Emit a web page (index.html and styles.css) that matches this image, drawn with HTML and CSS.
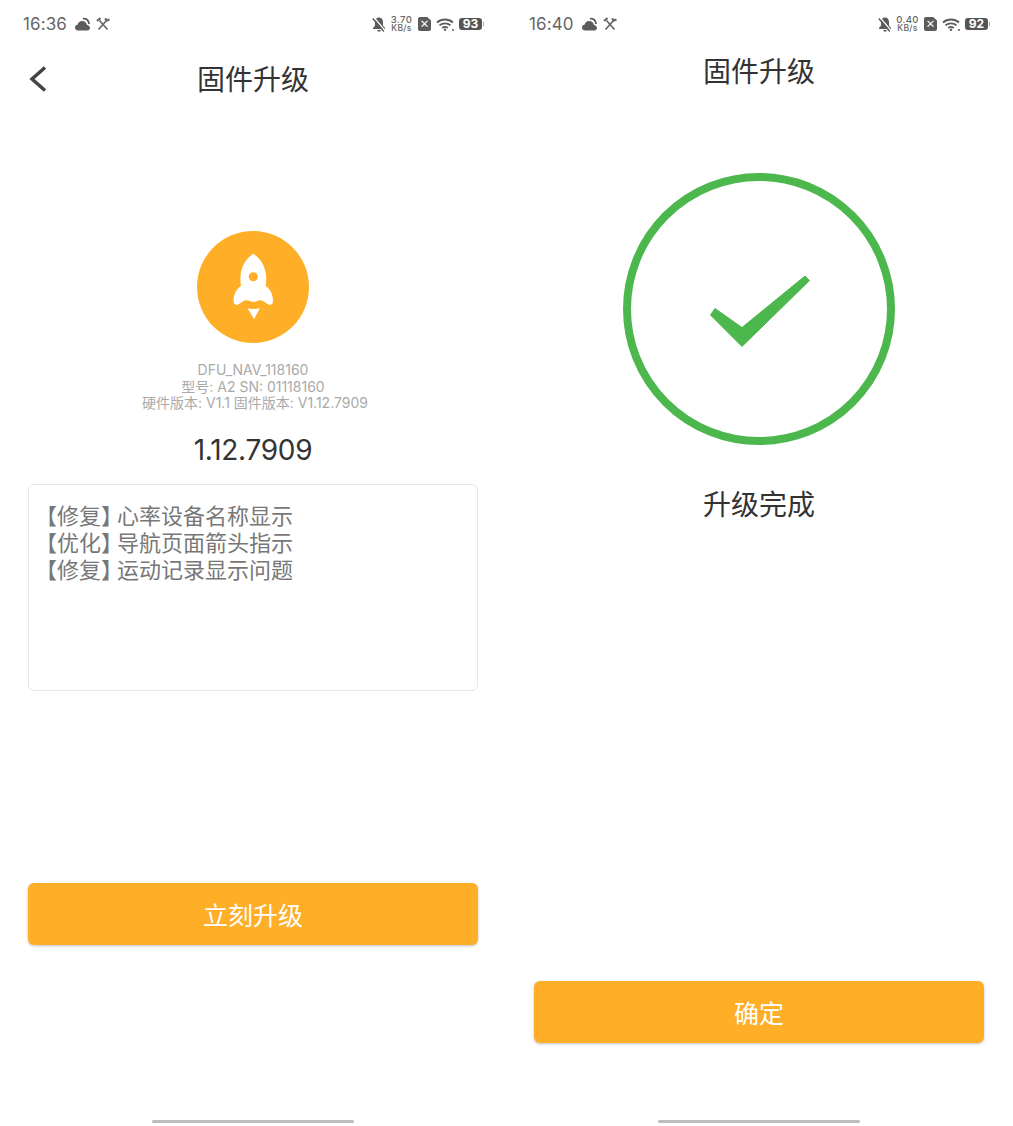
FILE: index.html
```html
<!DOCTYPE html>
<html lang="zh">
<head>
  <meta charset="UTF-8">
  <title>固件升级</title>
  <link rel="stylesheet" href="styles.css">
</head>
<body>
  <div class="screens">

    <div class="phone">
      <div class="status-bar">
        <span class="time">16:36</span>
        <svg class="ic-cloud" viewBox="0 0 15 14"><path d="M3 13.500C1 13.500 0 12 0 10.500 0 9 1.200 8 2.500 7.800 3 5.500 5 4 7 4c2.500 0 4.500 1.500 5 4 1.500 0 3 1.500 3 3s-1.500 2.500-2.500 2.500z"/><path class="crescent" d="M8 1.800c3-.8 6 1.700 6 5.200"/></svg>
        <svg class="ic-tools" viewBox="0 0 14 14"><path d="M3.500 3.500l8 9M10.500 3.500l-8 9"/><path class="head" d="M1 4l3.500-3M9 1.500l2 2 2.500-1"/></svg>
        <span class="status-right">
          <svg class="ic-bell" viewBox="0 0 14 15"><path d="M7 .5C4.500.5 3 2.500 3 5v3.500L1 11v1h12v-1l-2-2.500V5C11 2.500 9.500.5 7 .5zM5.200 13h3.600c0 .9-.8 1.700-1.800 1.700S5.200 13.900 5.200 13z"/><path class="gap" d="M2 .5l11 13"/><path class="slash" d="M.8 1.500l11 13"/></svg>
          <span class="speed"><b>3.70</b><b>KB/s</b></span>
          <span class="sim">×</span>
          <svg class="ic-wifi" viewBox="0 0 18 13"><path d="M1 4.500C5.500.5 12.500.5 17 4.500M3.500 7.400c3-2.600 8-2.600 11 0M6.200 10c1.600-1.200 4-1.200 5.600 0"/><circle cx="9" cy="11.800" r="1.200"/><circle cx="17" cy="12" r="1"/></svg>
          <span class="battery"><span class="battery-level">93</span></span>
        </span>
      </div>

      <div class="title-bar">
        <svg class="back" viewBox="0 0 20 28"><path d="M17 2.500L4 14l13 11.500"/></svg>
        <h1 class="title">固件升级</h1>
      </div>

      <div class="app-icon">
        <svg viewBox="0 0 112 112">
          <path d="M56.300 22.800C50 26.500 44 35 43.500 45.500c-.2 3.500 0 6.500.5 9.500-4.800 3.200-7.400 8.800-7.400 15 0 3.500 2.400 4.600 5 3.300 2.500-1.300 4-3.500 7-4 3-.3 5.200 1.400 7.700 1.700 2.500-.3 4.700-2 7.700-1.700 3 .5 4.500 2.700 7 4 2.600 1.300 5 .2 5-3.300 0-6.200-2.600-11.800-7.400-15 .5-3 .7-6 .5-9.500C68.600 35 62.600 26.500 56.300 22.800z" fill="#fff"/>
          <circle cx="56.300" cy="45.700" r="4.500" fill="#ffae27"/>
          <path d="M50.500 77.300c4 1 8.500 1 12.500 0L57 88z" fill="#fff"/>
        </svg>
      </div>

      <div class="device-info">
        <div>DFU_NAV_118160</div>
        <div>型号: A2 SN: 01118160</div>
        <div class="hw-line">硬件版本: V1.1 固件版本: V1.12.7909</div>
      </div>

      <div class="version">1.12.7909</div>

      <div class="changelog">
        <div><span class="tag">【修复】</span>心率设备名称显示</div>
        <div><span class="tag">【优化】</span>导航页面箭头指示</div>
        <div><span class="tag">【修复】</span>运动记录显示问题</div>
      </div>

      <button class="btn btn-upgrade">立刻升级</button>
      <div class="home-bar"></div>
    </div>

    <div class="phone">
      <div class="status-bar">
        <span class="time">16:40</span>
        <svg class="ic-cloud" viewBox="0 0 15 14"><path d="M3 13.500C1 13.500 0 12 0 10.500 0 9 1.200 8 2.500 7.800 3 5.500 5 4 7 4c2.500 0 4.500 1.500 5 4 1.500 0 3 1.500 3 3s-1.500 2.500-2.500 2.500z"/><path class="crescent" d="M8 1.800c3-.8 6 1.700 6 5.200"/></svg>
        <svg class="ic-tools" viewBox="0 0 14 14"><path d="M3.500 3.500l8 9M10.500 3.500l-8 9"/><path class="head" d="M1 4l3.500-3M9 1.500l2 2 2.500-1"/></svg>
        <span class="status-right">
          <svg class="ic-bell" viewBox="0 0 14 15"><path d="M7 .5C4.500.5 3 2.500 3 5v3.500L1 11v1h12v-1l-2-2.500V5C11 2.500 9.500.5 7 .5zM5.200 13h3.600c0 .9-.8 1.700-1.800 1.700S5.200 13.900 5.200 13z"/><path class="gap" d="M2 .5l11 13"/><path class="slash" d="M.8 1.500l11 13"/></svg>
          <span class="speed"><b>0.40</b><b>KB/s</b></span>
          <span class="sim">×</span>
          <svg class="ic-wifi" viewBox="0 0 18 13"><path d="M1 4.500C5.500.5 12.500.5 17 4.500M3.500 7.400c3-2.600 8-2.600 11 0M6.200 10c1.600-1.200 4-1.200 5.600 0"/><circle cx="9" cy="11.800" r="1.200"/><circle cx="17" cy="12" r="1"/></svg>
          <span class="battery"><span class="battery-level">92</span></span>
        </span>
      </div>

      <div class="title-bar title-bar-plain">
        <h1 class="title">固件升级</h1>
      </div>

      <div class="done-ring">
        <svg viewBox="0 0 272 272">
          <circle cx="136" cy="136" r="132" fill="none" stroke="#4cb74c" stroke-width="8"/>
          <path d="M87.500 142l4.500-6.500 27 19 63-51.500 4.500 4.500-67.500 66z" fill="#4cb74c" stroke="#4cb74c" stroke-width="1" stroke-linejoin="round"/>
        </svg>
      </div>

      <div class="done-text">升级完成</div>

      <button class="btn btn-confirm">确定</button>
      <div class="home-bar"></div>
    </div>

  </div>
</body>
</html>
```

FILE: styles.css
```css
html, body {
  margin: 0;
  padding: 0;
  background: #fff;
}
body {
  font-family: "Noto Sans CJK SC", "Noto Sans", sans-serif;
}
.screens {
  display: flex;
  width: 1013px;
  height: 1126px;
}
.phone {
  width: 506px;
  height: 1126px;
  padding: 0 28px;
  box-sizing: border-box;
  display: flex;
  flex-direction: column;
  align-items: center;
}

/* status bar */
.status-bar {
  align-self: stretch;
  height: 48px;
  margin: 0 -6px 0 -5px;
  display: flex;
  align-items: center;
  color: #666;
}
.time {
  font-family: Inter, sans-serif;
  font-size: 17px;
  color: #666;
  letter-spacing: 0.1px;
  margin-right: 8px;
}
.ic-cloud {
  width: 15px;
  height: 14px;
  fill: #5c5c5c;
  margin-right: 6px;
}
.ic-cloud .crescent {
  fill: none;
  stroke: #5c5c5c;
  stroke-width: 1.800;
}
.ic-tools {
  width: 14px;
  height: 14px;
  fill: none;
  stroke: #666;
  stroke-width: 1.700;
}
.ic-tools .head {
  stroke-width: 2.200;
}
.status-right {
  margin-left: auto;
  display: flex;
  align-items: center;
}
.ic-bell {
  width: 14px;
  height: 15px;
  fill: #5c5c5c;
  margin-right: 3px;
}
.ic-bell .slash {
  fill: none;
  stroke: #5c5c5c;
  stroke-width: 1.500;
}
.ic-bell .gap {
  fill: none;
  stroke: #fff;
  stroke-width: 1.200;
}
.speed {
  display: flex;
  flex-direction: column;
  align-items: center;
  width: 25px;
  margin-right: 4px;
  font-family: Inter, sans-serif;
  line-height: 9.500px;
  color: #666;
}
.speed b {
  font-weight: 500;
  font-size: 9.500px;
  letter-spacing: 0.4px;
}
.speed b:last-child {
  font-size: 8.500px;
  letter-spacing: 0.3px;
}
.sim {
  width: 13px;
  height: 14px;
  margin-right: 5px;
  background: #5c5c5c;
  border-radius: 2px;
  clip-path: polygon(0 0, 70% 0, 100% 25%, 100% 100%, 0 100%);
  color: #fff;
  font-size: 10px;
  font-weight: 700;
  line-height: 14px;
  text-align: center;
}
.ic-wifi {
  width: 18px;
  height: 13px;
  fill: #5c5c5c;
  stroke: #5c5c5c;
  stroke-width: 1.800;
  margin-right: 5px;
}
.ic-wifi path {
  fill: none;
}
.ic-wifi circle {
  stroke: none;
}
.battery {
  position: relative;
  width: 23px;
  height: 12px;
  background: #555;
  border-radius: 3px;
  margin-right: 2px;
  display: flex;
  align-items: center;
  justify-content: center;
}
.battery::after {
  content: "";
  position: absolute;
  right: -2px;
  top: 4px;
  width: 1.500px;
  height: 4px;
  background: #aaa;
}
.battery-level {
  color: #fff;
  font-family: Inter, sans-serif;
  font-size: 12px;
  font-weight: 700;
  line-height: 12px;
}

/* title */
.title-bar {
  position: relative;
  align-self: stretch;
  height: 60px;
  display: flex;
  align-items: center;
  justify-content: center;
}
.title-bar-plain {
  height: 44px;
}
.title {
  margin: 0;
  font-size: 28px;
  font-weight: 400;
  color: #333;
  line-height: 40px;
}
.back {
  position: absolute;
  left: 0;
  top: 17px;
  width: 20px;
  height: 28px;
  fill: none;
  stroke: #444;
  stroke-width: 3.500;
}

/* left screen */
.app-icon {
  width: 112px;
  height: 112px;
  margin-top: 123px;
  border-radius: 50%;
  background: #ffae27;
}
.app-icon svg {
  display: block;
  width: 112px;
  height: 112px;
}
.device-info {
  margin-top: 19px;
  font-family: Inter, "Noto Sans CJK SC", sans-serif;
  font-size: 14px;
  line-height: 16.500px;
  color: #aaa;
  text-align: center;
  white-space: nowrap;
}
.hw-line {
  padding-left: 4px;
}
.version {
  margin-top: 18px;
  font-family: Inter, sans-serif;
  font-size: 28px;
  line-height: 40px;
  color: #333;
  letter-spacing: -0.3px;
}
.changelog {
  align-self: stretch;
  height: 207px;
  margin-top: 14px;
  padding: 18px 0 18px 17px;
  box-sizing: border-box;
  border: 1px solid #e6e6e6;
  border-radius: 6px;
  font-family: Inter, "Noto Sans CJK SC", sans-serif;
  font-size: 22px;
  line-height: 27px;
  color: #777;
}
.tag {
  font-feature-settings: "halt";
  margin-right: 5px;
}
.btn {
  align-self: stretch;
  height: 62px;
  padding: 0;
  border: none;
  border-radius: 6px;
  background: #ffae27;
  box-shadow: 0 1px 3px rgba(0, 0, 0, 0.25);
  color: #fff;
  font-family: inherit;
  font-size: 25px;
}
.btn-upgrade {
  margin-top: 192px;
}
.home-bar {
  width: 202px;
  height: 3px;
  margin-top: auto;
  margin-bottom: 3px;
  background: #bdbdbd;
  border-radius: 2px;
}

/* right screen */
.done-ring {
  width: 272px;
  height: 272px;
  margin-top: 81px;
}
.done-ring svg {
  display: block;
  width: 272px;
  height: 272px;
}
.done-text {
  margin-top: 38px;
  font-size: 28px;
  line-height: 40px;
  color: #333;
}
.btn-confirm {
  margin-top: 458px;
}
```
